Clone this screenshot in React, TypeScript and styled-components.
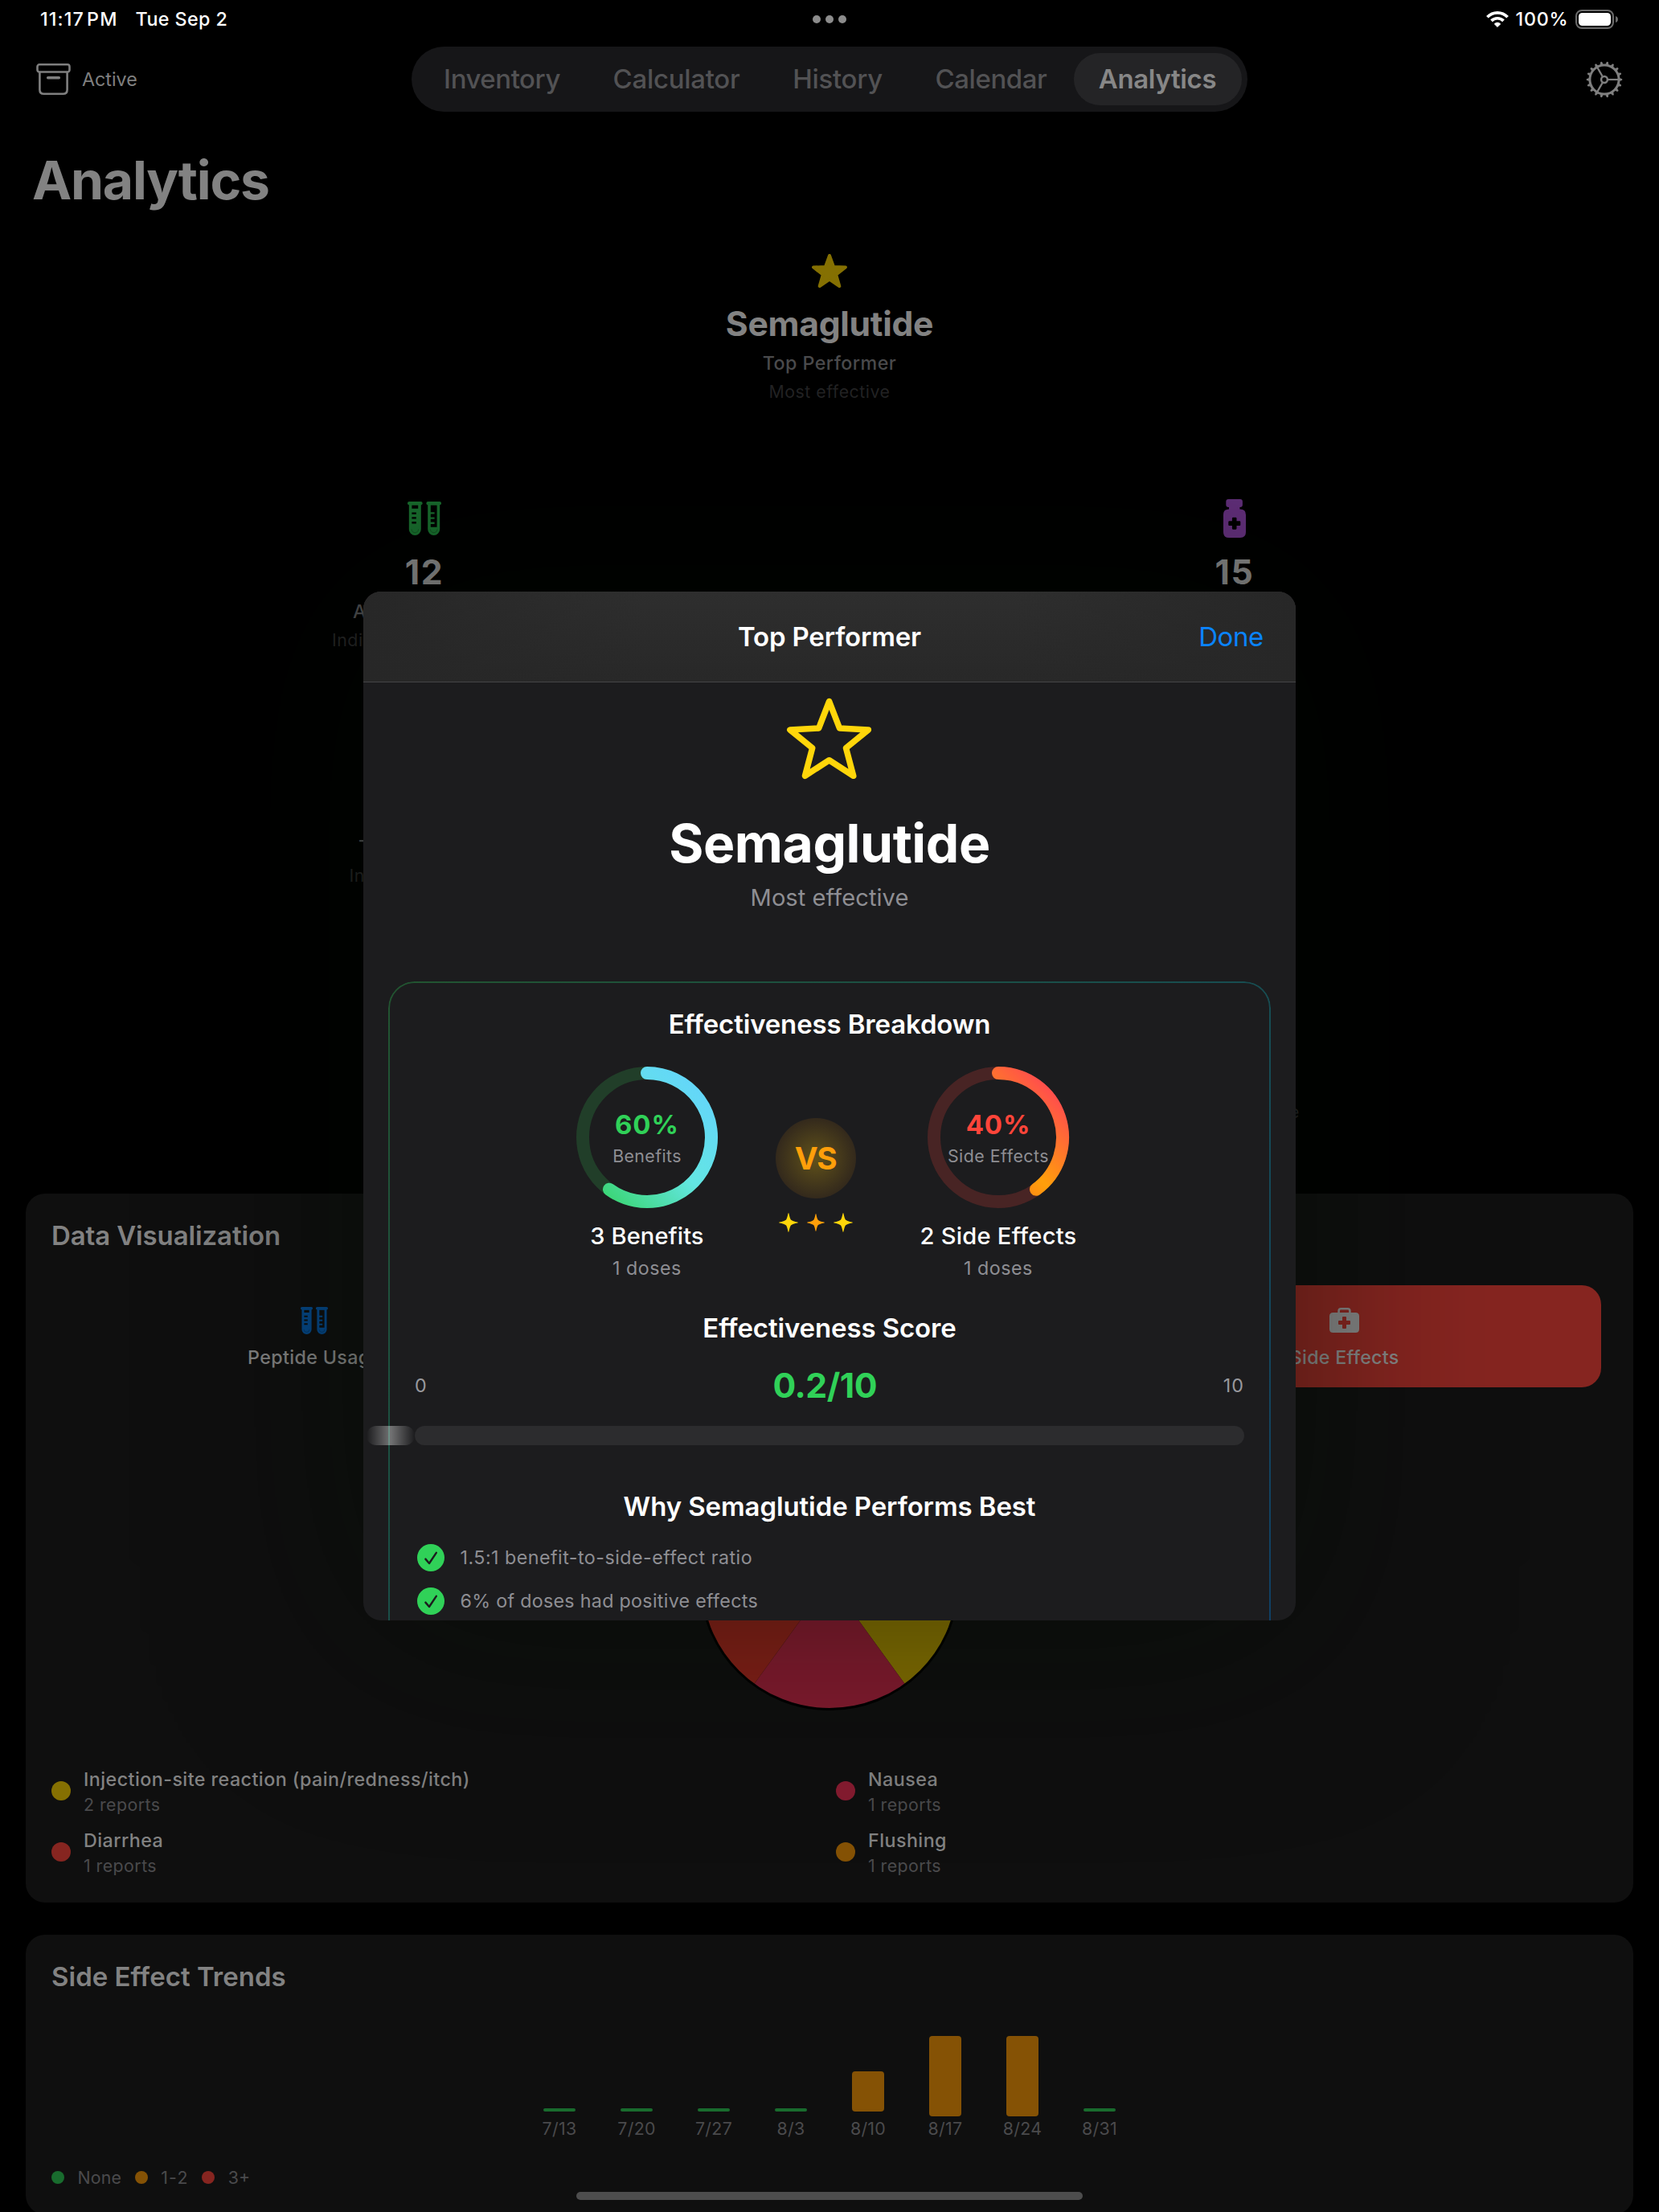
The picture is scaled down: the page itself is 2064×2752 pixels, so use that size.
import React from "react";
import styled, { createGlobalStyle } from "styled-components";

const GlobalStyle = createGlobalStyle`
  html, body {
    margin: 0;
    background: #000;
  }
  * {
    box-sizing: border-box;
  }
`;

const LINE_HEIGHTS: Record<number, number> = { 22: 26, 24: 32, 30: 40, 34: 44, 40: 50, 44: 56, 68: 82 };

/* Text on the iOS type scale; Inter is drawn at 97% so that its capitals keep the scale's height. */
const Text = styled.span<{
  $size: number;
  $weight?: number;
  $color?: string;
  $track?: number;
  $top?: number;
}>`
  display: block;
  flex: none;
  white-space: nowrap;
  font-family: Inter, "Liberation Sans", sans-serif;
  font-size: ${(p) => p.$size * 0.97}px;
  line-height: ${(p) => LINE_HEIGHTS[p.$size]}px;
  font-weight: ${(p) => p.$weight ?? 400};
  color: ${(p) => p.$color ?? "#8e8e93"};
  letter-spacing: ${(p) => p.$track ?? 0}px;
  margin-top: ${(p) => p.$top ?? 0}px;
`;

const Page = styled.main`
  position: relative;
  display: flex;
  flex-direction: column;
  width: 2064px;
  height: 2752px;
  overflow: hidden;
  background: #000;
`;

/* ---------- status bar ---------- */

const StatusBar = styled.header`
  flex: none;
  display: grid;
  grid-template-columns: 1fr auto 1fr;
  align-items: center;
  height: 48px;
  padding: 0 51px 0 50px;
`;

const StatusLeft = styled.div`
  display: flex;
  align-items: center;
  gap: 22px;
`;

const Clock = styled(Text)`
  word-spacing: -4px;
`;

const StatusRight = styled.div`
  display: flex;
  align-items: center;
  justify-content: flex-end;
  gap: 8.5px;
`;

const Dots = styled.div`
  display: flex;
  gap: 6px;
`;

const Dot = styled.i<{ $size: number; $color: string }>`
  flex: none;
  width: ${(p) => p.$size}px;
  height: ${(p) => p.$size}px;
  border-radius: 50%;
  background: ${(p) => p.$color};
`;

/* ---------- navigation ---------- */

const NavBar = styled.nav`
  flex: none;
  display: grid;
  grid-template-columns: 1fr auto 1fr;
  align-items: center;
  height: 101px;
  padding: 0 45px 0 45px;
`;

const ArchiveButton = styled.div`
  display: flex;
  align-items: center;
  gap: 14px;
`;

const TabBar = styled.div`
  display: flex;
  align-items: center;
  width: 1040px;
  height: 81px;
  padding: 0 7px 0 8px;
  border-radius: 41px;
  background: #161618;
`;

const Tab = styled.div<{ $width: number; $active?: boolean }>`
  display: flex;
  flex: none;
  align-items: center;
  justify-content: center;
  width: ${(p) => p.$width}px;
  height: 65px;
  padding: 0 1px 1px 0;
  border-radius: 33px;
  background: ${(p) => (p.$active ? "#242426" : "transparent")};
`;

const NavEnd = styled.div`
  display: flex;
  justify-content: flex-end;
`;

const Title = styled(Text)`
  padding-left: 40px;
`;

/* ---------- stats ---------- */

const Stats = styled.section`
  flex: none;
  height: 1220px;
  padding: 48px 32px 0;
`;

const StatGrid = styled.div`
  display: grid;
  grid-template-columns: 1fr 1fr;
  grid-auto-rows: 294px;
  column-gap: 16px;
`;

const Stat = styled.div<{ $hero?: boolean }>`
  display: flex;
  flex-direction: column;
  align-items: center;
  height: ${(p) => (p.$hero ? "308px" : "auto")};
`;

const IconBox = styled.div<{ $h: number }>`
  display: flex;
  align-items: center;
  justify-content: center;
  height: ${(p) => p.$h}px;
`;

const Line = styled(Text)<{ $width?: number; $align?: string }>`
  width: ${(p) => (p.$width ? `${p.$width}px` : "auto")};
  text-align: ${(p) => p.$align ?? "center"};
`;

/* ---------- cards ---------- */

const Card = styled.section<{ $h: number }>`
  flex: none;
  display: flex;
  flex-direction: column;
  height: ${(p) => p.$h}px;
  margin: 0 32px 40px;
  padding: 30px 32px 0;
  border-radius: 24px;
  background: #0f0f0f;
`;

const Segments = styled.div`
  display: grid;
  grid-template-columns: repeat(3, 1fr);
  gap: 2px;
  margin: 39.5px 8px 0;
`;

const Segment = styled.div<{ $active?: boolean }>`
  display: flex;
  flex-direction: column;
  align-items: center;
  height: 127px;
  padding-top: 28px;
  border-radius: 24px;
  background: ${(p) => (p.$active ? "#862520" : "transparent")};
`;

const PieHolder = styled.div`
  display: flex;
  justify-content: center;
  margin-top: 78px;
`;

const Legend = styled.div`
  display: grid;
  grid-template-columns: 1fr 1fr;
  gap: 16px;
  margin-top: 70px;
`;

const LegendItem = styled.div`
  display: flex;
  align-items: center;
  gap: 16px;
  height: 60px;
`;

const Chart = styled.div`
  flex: none;
  display: flex;
  align-items: flex-end;
  justify-content: center;
  gap: 56px;
  height: 180px;
`;

const ChartColumn = styled.div`
  display: flex;
  flex-direction: column;
  align-items: center;
  width: 40px;
`;

const Bar = styled.i<{ $h: number; $color: string; $drop?: number }>`
  width: 40px;
  height: ${(p) => p.$h}px;
  margin-bottom: ${(p) => 8 - (p.$drop ?? 0)}px;
  border-radius: ${(p) => (p.$h > 10 ? 4 : 2)}px;
  background: ${(p) => p.$color};
`;

const ChartKey = styled.div`
  display: flex;
  align-items: center;
  gap: 16.5px;
  margin-top: 35px;
`;

const HomeIndicator = styled.i`
  position: absolute;
  left: 717px;
  bottom: 15px;
  width: 630px;
  height: 10px;
  border-radius: 5px;
  background: #4d4d4d;
`;

/* ---------- sheet ---------- */

const Overlay = styled.div`
  position: absolute;
  inset: 0;
  display: flex;
  align-items: center;
  justify-content: center;
`;

const Sheet = styled.div`
  display: flex;
  flex-direction: column;
  width: 1160px;
  height: 1280px;
  overflow: hidden;
  border-radius: 22px;
  background: #1c1c1e;
  box-shadow: 0 10px 270px 10px rgba(0, 10, 0, 0.45);
`;

const SheetHeader = styled.header`
  flex: none;
  display: grid;
  grid-template-columns: 1fr auto 1fr;
  align-items: center;
  height: 113px;
  padding: 0 40px;
  border-bottom: 1px solid #444446;
  background: linear-gradient(90deg, #272727 0%, rgba(39, 39, 39, 0) 30%, rgba(39, 39, 39, 0) 70%, #272727 100%),
    linear-gradient(#2e2e2e, #282828);
`;

const Done = styled(Text)`
  grid-column: 3;
  justify-self: end;
`;

const SheetTitle = styled(Text)`
  grid-column: 2;
`;

const SheetBody = styled.div`
  display: flex;
  flex-direction: column;
  align-items: center;
  padding: 19px 32px 0;
`;

const Breakdown = styled.section`
  position: relative;
  flex: none;
  display: flex;
  flex-direction: column;
  align-items: center;
  width: 1096px;
  height: 1100px;
  margin-top: 84px;
  padding: 31px 32px 0;

  &::before {
    content: "";
    position: absolute;
    inset: 0 -1px;
    padding: 2px;
    border-radius: 33px;
    background: linear-gradient(to bottom right, #225430, #174d52 50%, #0d3a6b);
    mask: linear-gradient(#000 0 0) content-box exclude, linear-gradient(#000 0 0);
  }
`;

const Versus = styled.div`
  display: flex;
  align-items: center;
  margin: 31px 7px 0 0;
`;

const Side = styled.div<{ $w: number }>`
  display: flex;
  flex-direction: column;
  align-items: center;
  width: ${(p) => p.$w}px;
`;

const RingBox = styled.div`
  display: grid;
  width: 176px;
  height: 176px;

  > * {
    grid-area: 1 / 1;
  }
`;

const RingLabel = styled.div`
  display: flex;
  flex-direction: column;
  align-items: center;
  padding-top: 50px;
`;

const VsColumn = styled.div<{ $right: number }>`
  display: flex;
  flex-direction: column;
  align-items: center;
  gap: 18px;
  margin: 3px ${(p) => p.$right}px 0 72px;
`;

const VsBadge = styled.div`
  display: flex;
  align-items: center;
  justify-content: center;
  width: 100px;
  height: 100px;
  padding-right: 1px;
  border-radius: 50%;
  background: radial-gradient(circle closest-side, #61521a, #33291c);
`;

const Sparkles = styled.div`
  display: flex;
  align-items: center;
  gap: 11px;
`;

const ScoreRow = styled.div`
  display: flex;
  align-items: center;
  align-self: stretch;
  justify-content: space-between;
  margin-top: 22px;
`;

const ScoreTrack = styled.div`
  position: relative;
  align-self: stretch;
  height: 24px;
  margin-top: 22px;
  border-radius: 12px;
  background: #2c2c2e;
`;

const Shimmer = styled.i`
  position: absolute;
  top: 0;
  left: -60px;
  width: 60px;
  height: 24px;
  border-radius: 12px;
  background: linear-gradient(90deg, transparent, rgba(255, 255, 255, 0.38), transparent);
`;

const Reasons = styled.ul`
  align-self: stretch;
  display: flex;
  flex-direction: column;
  gap: 20px;
  margin: 25px 0 0;
  padding: 0 0 0 3px;
  list-style: none;
`;

const Reason = styled.li`
  display: flex;
  align-items: center;
  gap: 19.5px;
  height: 34px;
`;

/* ---------- icons ---------- */

const Svg = styled.svg`
  display: block;
  flex: none;
  overflow: visible;
`;

const star = (cx: number, cy: number, outer: number, inner: number) =>
  Array.from({ length: 10 }, (_, i) => {
    const r = i % 2 ? inner : outer;
    const a = (-90 + i * 36) * (Math.PI / 180);
    return `${(cx + r * Math.cos(a)).toFixed(2)},${(cy + r * Math.sin(a)).toFixed(2)}`;
  }).join(" ");

const WifiIcon = () => (
  <Svg width="28" height="20" viewBox="0 0 28 20" fill="none" stroke="#fff" strokeWidth="3.7">
    <path d="M1.4 7.3A17.2 17.2 0 0 1 26.6 7.3" />
    <path d="M6.5 11.9A10.5 10.5 0 0 1 21.5 11.9" />
    <path d="M14 19.6L10.2 15.8Q14 12.4 17.8 15.8Z" fill="#fff" stroke="#fff" strokeWidth="0.8" strokeLinejoin="round" />
  </Svg>
);

const BatteryIcon = () => (
  <Svg width="53" height="24" viewBox="0 0 53 24">
    <rect x="1" y="1" width="46" height="22" rx="7" fill="none" stroke="#6b6b6b" strokeWidth="2" />
    <rect x="4" y="4" width="40" height="16" rx="4.5" fill="#fff" />
    <path d="M50 8Q53 9 53 12T50 16Z" fill="#6b6b6b" />
  </Svg>
);

const ArchiveIcon = () => (
  <Svg width="43" height="39" viewBox="0 0 43 39" fill="none" stroke="#7f7f7f" strokeWidth="2.6">
    <rect x="1.5" y="1.3" width="40" height="9.2" rx="2.6" />
    <path d="M4.4 10.5V32.7Q4.4 37.7 9.4 37.7H33.6Q38.6 37.7 38.6 32.7V10.5" />
    <path d="M14.6 17.8H28.4" strokeWidth="3.4" strokeLinecap="round" />
  </Svg>
);

const GearIcon = () => (
  <Svg width="46" height="46" viewBox="-23 -23 46 46" fill="none" stroke="#7f7f7f">
    <circle r="18.1" strokeWidth="3" />
    {Array.from({ length: 18 }, (_, i) => (
      <path key={i} d="M18.5 -2L21.9 -1.1Q23 0 21.9 1.1L18.5 2Z" fill="#7f7f7f" stroke="none" transform={`rotate(${i * 20})`} />
    ))}
    <circle r="3.9" strokeWidth="2.5" />
    {[0, 120, 240].map((a) => (
      <path key={a} d="M4.8 0H17.5" strokeWidth="2.2" transform={`rotate(${a})`} />
    ))}
  </Svg>
);

const StarIcon = () => (
  <Svg width="44" height="42" viewBox="0 0 44 42">
    <polygon points={star(22, 23, 21, 8.6)} fill="#857002" stroke="#857002" strokeWidth="4" strokeLinejoin="round" />
  </Svg>
);

const StarOutlineIcon = () => (
  <Svg width="106" height="102" viewBox="0 0 106 102">
    <polygon points={star(52.6, 55.8, 51.2, 22)} fill="none" stroke="#ffd60a" strokeWidth="7.6" strokeLinejoin="round" />
  </Svg>
);

const TubesIcon = ({ size, color }: { size: number; color: string }) => (
  <Svg width={size} height={size} viewBox="0 0 42 42" fill={color}>
    <rect width="18.6" height="4.2" rx="2" />
    <rect x="23.4" width="18.6" height="4.2" rx="2" />
    <path
      fillRule="evenodd"
      d="M1.8 3H16.8V34.5A7.5 7.5 0 0 1 1.8 34.5ZM5.4 4.6V8.8H13.2V4.6ZM5.4 13.4V15.8H10.8V13.4ZM5.4 19.2V21.6H10.8V19.2ZM5.4 25V27.4H10.8V25Z"
    />
    <path
      fillRule="evenodd"
      d="M25.2 3H40.2V34.5A7.5 7.5 0 0 1 25.2 34.5ZM28.8 4.6V13.2H33.6V15.6H28.8V19.4H33.6V21.8H28.8V25.6H33.6V28H28.8V31.8H36.6V4.6Z"
    />
    <path d="M5 34.4A4.3 4.3 0 0 0 13.6 34.4M28.4 34.4A4.3 4.3 0 0 0 37 34.4" fill="none" stroke="#000" strokeOpacity="0.35" strokeWidth="0.7" />
  </Svg>
);

const BottleIcon = () => (
  <Svg width="28" height="48" viewBox="0 0 28 48" fill="#622f7b">
    <rect x="3.3" width="20.6" height="10" rx="3" />
    <rect x="7" y="9" width="13.4" height="5" />
    <path
      fillRule="evenodd"
      d="M7 12.4H21Q28 12.4 28 19.4V41Q28 48 21 48H7Q0 48 0 41V19.4Q0 12.4 7 12.4ZM12 22.8Q10.9 22.8 10.9 23.9V27.3H7.4Q6.3 27.3 6.3 28.4V31.9Q6.3 33 7.4 33H10.9V36.6Q10.9 37.7 12 37.7H15.4Q16.5 37.7 16.5 36.6V33H20.2Q21.3 33 21.3 31.9V28.4Q21.3 27.3 20.2 27.3H16.5V23.9Q16.5 22.8 15.4 22.8Z"
    />
  </Svg>
);

const MedkitIcon = () => (
  <Svg width="37" height="31" viewBox="0 0 37 31" fill="#858585">
    <path d="M11.6 7V4Q11.6 1.3 14.3 1.3H22.7Q25.4 1.3 25.4 4V7" fill="none" stroke="#858585" strokeWidth="2.6" />
    <path
      fillRule="evenodd"
      d="M4.5 6H32.5Q37 6 37 10.5V26.5Q37 31 32.5 31H4.5Q0 31 0 26.5V10.5Q0 6 4.5 6ZM17 11Q16 11 16 12V16H12Q11 16 11 17V20Q11 21 12 21H16V25Q16 26 17 26H20Q21 26 21 25V21H25Q26 21 26 20V17Q26 16 25 16H21V12Q21 11 20 11Z"
    />
  </Svg>
);

const SparkleIcon = ({ size, color }: { size: number; color: string }) => (
  <Svg width={size} height={size} viewBox="0 0 24 24" fill={color}>
    <path d="M12 0C12.7 0 13.1 5.6 14.9 8.4C17.8 10.9 24 11.3 24 12C24 12.7 17.8 13.1 14.9 15.6C13.1 18.4 12.7 24 12 24C11.3 24 10.9 18.4 9.1 15.6C6.2 13.1 0 12.7 0 12C0 11.3 6.2 10.9 9.1 8.4C10.9 5.6 11.3 0 12 0Z" />
  </Svg>
);

const CheckIcon = () => (
  <Svg width="34" height="34" viewBox="0 0 34 34">
    <circle cx="17" cy="17" r="17" fill="#30d158" />
    <path d="M10.4 18.6L15 24L23.8 10.8" fill="none" stroke="#1c1c1e" strokeWidth="2.4" strokeLinecap="round" strokeLinejoin="round" />
  </Svg>
);

const point = (cx: number, cy: number, r: number, deg: number) => {
  const a = ((deg - 90) * Math.PI) / 180;
  return `${(cx + r * Math.cos(a)).toFixed(2)} ${(cy + r * Math.sin(a)).toFixed(2)}`;
};

const arc = (cx: number, cy: number, r: number, from: number, to: number) =>
  `M${point(cx, cy, r, from)}A${r} ${r} 0 ${to - from > 180 ? 1 : 0} 1 ${point(cx, cy, r, to)}`;

/* Progress ring: clockwise from the top, gradient running from bottom left to top right. */
const Ring = ({ id, value, track, stops }: { id: string; value: number; track: string; stops: string[] }) => (
  <Svg width="176" height="176" viewBox="0 0 176 176" fill="none" strokeWidth="16">
    <defs>
      <linearGradient id={id} gradientUnits="userSpaceOnUse" x1="8" y1="168" x2="168" y2="8">
        {stops.map((c, i) => (
          <stop key={c} offset={i / (stops.length - 1)} stopColor={c} />
        ))}
      </linearGradient>
    </defs>
    <circle cx="88" cy="88" r="80" stroke={track} />
    <path d={arc(88, 88, 80, 0, value * 360)} stroke={`url(#${id})`} strokeLinecap="round" />
  </Svg>
);

const SLICES = [
  { from: 0, to: 144, color: "#857002" },
  { from: 144, to: 216, color: "#851b30" },
  { from: 216, to: 288, color: "#862018" },
  { from: 288, to: 360, color: "#855205" },
];

const Pie = () => (
  <Svg width="324" height="324" viewBox="0 0 324 324">
    {SLICES.map((s) => (
      <path key={s.from} d={`${arc(162, 162, 160, s.from, s.to)}L162 162Z`} fill={s.color} />
    ))}
    <circle cx="162" cy="162" r="160.5" fill="none" stroke="#000" strokeWidth="3" />
  </Svg>
);

/* ---------- data ---------- */

const TABS = [
  { label: "Inventory", track: -0.45, width: 210 },
  { label: "Calculator", track: -0.28, width: 224 },
  { label: "History", track: -0.28, width: 177 },
  { label: "Calendar", track: -0.43, width: 205 },
  { label: "Analytics", track: -0.36, width: 209, active: true },
];

const EFFECTS = [
  { name: "Injection-site reaction (pain/redness/itch)", count: "2 reports", color: "#857002" },
  { name: "Nausea", count: "1 reports", color: "#851b30" },
  { name: "Diarrhea", count: "1 reports", color: "#862520" },
  { name: "Flushing", count: "1 reports", color: "#855205" },
];

const WEEKS = [
  { label: "7/13", h: 4 },
  { label: "7/20", h: 4 },
  { label: "7/27", h: 4 },
  { label: "8/3", h: 4 },
  { label: "8/10", h: 50 },
  { label: "8/17", h: 100, drop: 6 },
  { label: "8/24", h: 100, drop: 6 },
  { label: "8/31", h: 4 },
];

const KEY = [
  { label: "None", color: "#196c2e", track: 0.18 },
  { label: "1-2", color: "#855205", track: 1.3 },
  { label: "3+", color: "#862520", track: 0 },
];

const DIM = "#828282";
const LABEL = "#4a4a4c";
const FAINT = "#232324";

export default function App() {
  return (
    <Page>
      <GlobalStyle />

      <StatusBar>
        <StatusLeft>
          <Clock $size={24} $weight={500} $color="#fff" $track={1.1}>11:17 PM</Clock>
          <Text $size={24} $weight={500} $color="#fff" $track={0.42}>Tue Sep 2</Text>
        </StatusLeft>
        <Dots>
          <Dot $size={10} $color="#8c8c8c" />
          <Dot $size={10} $color="#8c8c8c" />
          <Dot $size={10} $color="#8c8c8c" />
        </Dots>
        <StatusRight>
          <WifiIcon />
          <Text $size={24} $weight={500} $color="#fff" $track={0.8}>100%</Text>
          <BatteryIcon />
        </StatusRight>
      </StatusBar>

      <NavBar>
        <ArchiveButton>
          <ArchiveIcon />
          <Text $size={24} $color="#7f7f7f">Active</Text>
        </ArchiveButton>
        <TabBar>
          {TABS.map((t) => (
            <Tab key={t.label} $width={t.width} $active={t.active}>
              <Text $size={34} $weight={t.active ? 600 : 500} $color={t.active ? "#878787" : "#525254"} $track={t.track}>
                {t.label}
              </Text>
            </Tab>
          ))}
        </TabBar>
        <NavEnd>
          <GearIcon />
        </NavEnd>
      </NavBar>

      <Title $size={68} $weight={700} $color={DIM} $track={-1.23} $top={34}>Analytics</Title>

      <Stats>
        <Stat $hero>
          <IconBox $h={48}><StarIcon /></IconBox>
          <Text $size={44} $weight={700} $color={DIM} $track={-0.3} $top={13.5}>Semaglutide</Text>
          <Text $size={24} $weight={500} $color={LABEL} $track={0.44} $top={5}>Top Performer</Text>
          <Text $size={22} $color={FAINT} $track={0.51} $top={6}>Most effective</Text>
        </Stat>
        <StatGrid>
          <Stat>
            <IconBox $h={48}><TubesIcon size={42} color="#186b2d" /></IconBox>
            <Text $size={44} $weight={700} $color={DIM} $track={1.6} $top={15}>12</Text>
            <Line $size={24} $weight={500} $color={LABEL} $track={0.44} $top={5} $width={178} $align="left">Active Peptides</Line>
            <Line $size={22} $color={FAINT} $track={0.5} $top={6} $width={230} $align="left">Individual compounds</Line>
          </Stat>
          <Stat>
            <IconBox $h={48}><BottleIcon /></IconBox>
            <Text $size={44} $weight={700} $color={DIM} $track={1.6} $top={15}>15</Text>
          </Stat>
          <Stat>
            <IconBox $h={118} />
            <Line $size={24} $weight={500} $color={LABEL} $track={0.44} $top={5} $width={164} $align="left">Total Doses</Line>
            <Line $size={22} $color={FAINT} $track={0.5} $top={6} $width={187} $align="left">Injections logged</Line>
          </Stat>
          <Stat />
          <Stat />
          <Stat>
            <IconBox $h={155} />
            <Line $size={22} $color={FAINT} $track={0.5} $top={6} $width={162} $align="right">Per dose</Line>
          </Stat>
        </StatGrid>
      </Stats>

      <Card $h={882}>
        <Text $size={34} $weight={600} $color={DIM} $track={-0.11}>Data Visualization</Text>
        <Segments>
          <Segment>
            <IconBox $h={32}><TubesIcon size={34} color="#054787" /></IconBox>
            <Text $size={24} $weight={500} $color={DIM} $track={0.35} $top={14}>Peptide Usage</Text>
          </Segment>
          <Segment />
          <Segment $active>
            <IconBox $h={32}><MedkitIcon /></IconBox>
            <Text $size={24} $weight={500} $color="#868686" $track={0.27} $top={14}>Side Effects</Text>
          </Segment>
        </Segments>
        <PieHolder>
          <Pie />
        </PieHolder>
        <Legend>
          {EFFECTS.map((e) => (
            <LegendItem key={e.name}>
              <Dot $size={24} $color={e.color} />
              <div>
                <Text $size={24} $weight={500} $color={DIM} $track={0.45}>{e.name}</Text>
                <Text $size={22} $color={LABEL} $track={0.45} $top={2}>{e.count}</Text>
              </div>
            </LegendItem>
          ))}
        </Legend>
      </Card>

      <Card $h={348}>
        <Text $size={34} $weight={600} $color={DIM} $track={0.03}>Side Effect Trends</Text>
        <Chart>
          {WEEKS.map((w) => (
            <ChartColumn key={w.label}>
              <Bar $h={w.h} $color={w.h > 4 ? "#855205" : "#196c2e"} $drop={w.drop} />
              <Text $size={22} $color={LABEL} $track={0.3}>{w.label}</Text>
            </ChartColumn>
          ))}
        </Chart>
        <ChartKey>
          {KEY.map((k) => (
            <React.Fragment key={k.label}>
              <Dot $size={16} $color={k.color} />
              <Text $size={22} $color={LABEL} $track={k.track}>{k.label}</Text>
            </React.Fragment>
          ))}
        </ChartKey>
      </Card>

      <HomeIndicator />

      <Overlay>
        <Sheet>
          <SheetHeader>
            <SheetTitle $size={34} $weight={600} $color="#fff" $track={-0.17}>Top Performer</SheetTitle>
            <Done $size={34} $color="#0a84ff" $track={-0.35}>Done</Done>
          </SheetHeader>
          <SheetBody>
            <StarOutlineIcon />
            <Text $size={68} $weight={700} $color="#fff" $track={-0.45} $top={38}>Semaglutide</Text>
            <Text $size={30} $track={0.05} $top={7}>Most effective</Text>

            <Breakdown>
              <Text $size={34} $weight={600} $color="#fff" $track={-0.13}>Effectiveness Breakdown</Text>
              <Versus>
                <Side $w={176}>
                  <RingBox>
                    <Ring id="benefits" value={0.6} track="#213e29" stops={["#30d158", "#63e6e2", "#64d2ff"]} />
                    <RingLabel>
                      <Text $size={34} $weight={700} $color="#30d158" $track={1}>60%</Text>
                      <Text $size={22} $track={0.39} $top={3.5}>Benefits</Text>
                    </RingLabel>
                  </RingBox>
                  <Text $size={30} $weight={500} $color="#fff" $track={0.07} $top={15}>3 Benefits</Text>
                  <Text $size={24} $track={0.49} $top={4}>1 doses</Text>
                </Side>
                <VsColumn $right={79}>
                  <VsBadge>
                    <Text $size={40} $weight={700} $color="#ff9f0a" $track={-1.4}>VS</Text>
                  </VsBadge>
                  <Sparkles>
                    <SparkleIcon size={24} color="#ffd60a" />
                    <SparkleIcon size={22} color="#ff9f0a" />
                    <SparkleIcon size={24} color="#ffd60a" />
                  </Sparkles>
                </VsColumn>
                <Side $w={196}>
                  <RingBox>
                    <Ring id="effects" value={0.4} track="#482424" stops={["#ff453a", "#ff9f0a", "#ff375f"]} />
                    <RingLabel>
                      <Text $size={34} $weight={700} $color="#ff453a" $track={0.9}>40%</Text>
                      <Text $size={22} $track={0.5} $top={3.5}>Side Effects</Text>
                    </RingLabel>
                  </RingBox>
                  <Text $size={30} $weight={500} $color="#fff" $track={0.25} $top={15}>2 Side Effects</Text>
                  <Text $size={24} $track={0.49} $top={4}>1 doses</Text>
                </Side>
              </Versus>

              <Text $size={34} $weight={600} $color="#fff" $track={-0.11} $top={36}>Effectiveness Score</Text>
              <ScoreRow>
                <Text $size={24} $color="#98989d">0</Text>
                <Text $size={44} $weight={700} $color="#30d158" $track={-0.45}>0.2/10</Text>
                <Text $size={24} $color="#98989d" $track={1}>10</Text>
              </ScoreRow>
              <ScoreTrack>
                <Shimmer />
              </ScoreTrack>

              <Text $size={34} $weight={600} $color="#fff" $track={-0.09} $top={54}>Why Semaglutide Performs Best</Text>
              <Reasons>
                <Reason>
                  <CheckIcon />
                  <Text $size={24} $track={0.47}>1.5:1 benefit-to-side-effect ratio</Text>
                </Reason>
                <Reason>
                  <CheckIcon />
                  <Text $size={24} $track={0.29}>6% of doses had positive effects</Text>
                </Reason>
              </Reasons>
            </Breakdown>
          </SheetBody>
        </Sheet>
      </Overlay>
    </Page>
  );
}
